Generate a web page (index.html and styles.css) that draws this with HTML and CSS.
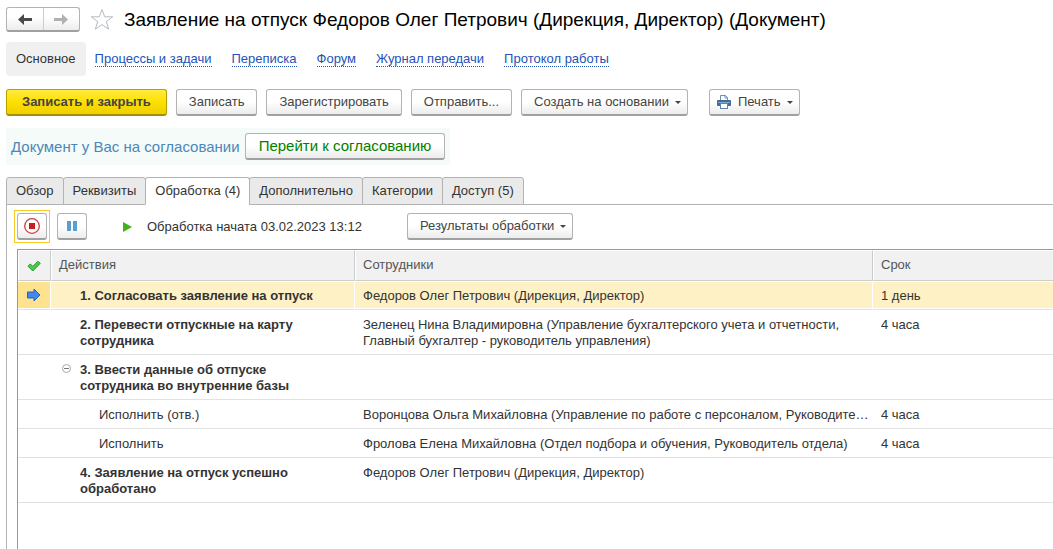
FILE: index.html
```html
<!DOCTYPE html>
<html lang="ru">
<head>
<meta charset="utf-8">
<title>Заявление на отпуск</title>
<link rel="stylesheet" href="styles.css">
</head>
<body>
<header class="titlebar">
  <div class="history">
    <button class="history-btn" type="button" aria-label="Назад">
      <svg width="14" height="11" viewBox="0 0 14 11"><path d="M6 0v4h8v3H6v4L0 5.500z" fill="#4a4a4a"/></svg>
    </button>
    <button class="history-btn" type="button" aria-label="Вперед">
      <svg width="14" height="11" viewBox="0 0 14 11"><path d="M8 0v4H0v3h8v4l6-5.500z" fill="#b0b0b0"/></svg>
    </button>
  </div>
  <button class="star" type="button" aria-label="Избранное">
    <svg width="24" height="23" viewBox="0 0 24 23"><path d="M12 1.500l2.700 7.300h8l-6.400 4.800 2.400 7.600-6.700-4.600-6.700 4.600 2.400-7.600-6.400-4.800h8z" fill="#fff" stroke="#b4bac4" stroke-width="1"/></svg>
  </button>
  <h1 class="title">Заявление на отпуск Федоров Олег Петрович (Дирекция, Директор) (Документ)</h1>
</header>

<nav class="sections">
  <span class="section-current">Основное</span>
  <a href="#">Процессы и задачи</a>
  <a href="#">Переписка</a>
  <a href="#">Форум</a>
  <a href="#">Журнал передачи</a>
  <a href="#">Протокол работы</a>
</nav>

<div class="commands">
  <button class="btn btn-primary" type="button">Записать и закрыть</button>
  <button class="btn" type="button">Записать</button>
  <button class="btn" type="button">Зарегистрировать</button>
  <button class="btn" type="button">Отправить...</button>
  <button class="btn btn-menu" type="button">Создать на основании</button>
  <button class="btn btn-menu btn-print" type="button">
    <svg width="14" height="14" viewBox="0 0 14 14"><path d="M3.500 6V.5h5l2 2V6" fill="#fff" stroke="#6f8fb0"/><path d="M8 .5V3h2.500" fill="none" stroke="#6f8fb0"/><rect x="0" y="5" width="14" height="6" rx="1" fill="#3f6c98"/><path d="M1 7.500h12" stroke="#87a8c8"/><rect x="3.500" y="8.500" width="7" height="5" fill="#fff" stroke="#5f83a8"/></svg>
    Печать
  </button>
</div>

<div class="notice">
  <span>Документ у Вас на согласовании</span>
  <button class="btn btn-approve" type="button">Перейти к согласованию</button>
</div>

<div class="tabs" role="tablist">
  <button class="tab" role="tab" type="button">Обзор</button>
  <button class="tab" role="tab" type="button">Реквизиты</button>
  <button class="tab tab-active" role="tab" type="button" aria-selected="true">Обработка (4)</button>
  <button class="tab" role="tab" type="button">Дополнительно</button>
  <button class="tab" role="tab" type="button">Категории</button>
  <button class="tab" role="tab" type="button">Доступ (5)</button>
</div>

<main class="pane">
  <div class="process-bar">
    <div class="focus-frame">
      <button class="btn btn-icon" type="button" aria-label="Остановить">
        <svg width="16" height="16" viewBox="0 0 16 16"><circle cx="8" cy="8" r="7.300" fill="#fff" stroke="#cf3a3a" stroke-width="1.300"/><rect x="5" y="5" width="6" height="6" fill="#c81e1e"/></svg>
      </button>
    </div>
    <button class="btn btn-icon" type="button" aria-label="Приостановить">
      <svg width="10" height="10" viewBox="0 0 10 10"><path d="M0 0h4v10H0zM6 0h4v10H6z" fill="#5a9fd0"/></svg>
    </button>
    <p class="status">
      <svg width="9" height="10" viewBox="0 0 9 10"><path d="M0 0l9 5-9 5z" fill="#43b31c"/></svg>
      Обработка начата 03.02.2023 13:12
    </p>
    <button class="btn btn-menu" type="button">Результаты обработки</button>
  </div>

  <div class="grid">
    <table class="steps">
      <colgroup><col class="col-mark"><col class="col-action"><col class="col-staff"><col></colgroup>
      <thead>
        <tr>
          <th class="mark"><svg width="14" height="12" viewBox="0 0 14 12"><path d="M1 6.200l2.300-2.300 2.500 2.500L11 1.200l2.200 2.200-7.400 7.600z" fill="#4ccb45" stroke="#219a2c" stroke-linejoin="round"/></svg></th>
          <th>Действия</th>
          <th>Сотрудники</th>
          <th>Срок</th>
        </tr>
      </thead>
      <tbody>
        <tr class="current">
          <td class="mark"><svg width="15" height="14" viewBox="0 0 15 14"><path d="M1.500 4H8V1l6 6-6 6v-3H1.500z" fill="#4387f5" stroke="#2b62a8"/></svg></td>
          <td class="step">1. Согласовать заявление на отпуск</td>
          <td>Федоров Олег Петрович (Дирекция, Директор)</td>
          <td>1 день</td>
        </tr>
        <tr>
          <td></td>
          <td class="step">2. Перевести отпускные на карту сотрудника</td>
          <td>Зеленец Нина Владимировна (Управление бухгалтерского учета и отчетности, Главный бухгалтер - руководитель управления)</td>
          <td>4 часа</td>
        </tr>
        <tr>
          <td></td>
          <td class="step">
            <button class="toggle" type="button" aria-label="Свернуть"><svg width="9" height="9" viewBox="0 0 9 9"><circle cx="4.500" cy="4.500" r="4" fill="#fff" stroke="#a8a8a8"/><path d="M2 4.500h5" stroke="#777"/></svg></button>
            3. Ввести данные об отпуске сотрудника во внутренние базы
          </td>
          <td></td>
          <td></td>
        </tr>
        <tr>
          <td></td>
          <td class="substep">Исполнить (отв.)</td>
          <td class="single">Воронцова Ольга Михайловна (Управление по работе с персоналом, Руководите…</td>
          <td>4 часа</td>
        </tr>
        <tr>
          <td></td>
          <td class="substep">Исполнить</td>
          <td class="single">Фролова Елена Михайловна (Отдел подбора и обучения, Руководитель отдела)</td>
          <td>4 часа</td>
        </tr>
        <tr>
          <td></td>
          <td class="step">4. Заявление на отпуск успешно обработано</td>
          <td>Федоров Олег Петрович (Дирекция, Директор)</td>
          <td></td>
        </tr>
      </tbody>
    </table>
  </div>
</main>
</body>
</html>
```
FILE: styles.css
```css
* { box-sizing: border-box; }

body {
  margin: 0;
  min-height: 100vh;
  padding: 7px 0 0 6px;
  display: flex;
  flex-direction: column;
  background: #fff;
  color: #333;
  font: 13px/16px "Liberation Sans", Arial, sans-serif;
}

button { font: inherit; color: inherit; cursor: pointer; }
svg { display: block; flex: none; }

/* Title row */
.titlebar { display: flex; align-items: center; height: 25px; }

.history {
  display: flex;
  width: 74px;
  height: 25px;
  border: 1px solid #b3b3b3;
  border-bottom: 2px solid #a0a0a0;
  border-radius: 3px;
  background: linear-gradient(#fff 40%, #ededed);
}
.history-btn {
  flex: 1;
  display: flex;
  align-items: center;
  justify-content: center;
  border: 0;
  padding: 0;
  background: none;
}
.history-btn + .history-btn { border-left: 1px solid #ccc; }

.star { margin-left: 10px; padding: 0; border: 0; background: none; }

.title {
  margin: 0 0 0 10px;
  color: #000;
  font-size: 19px;
  line-height: 24px;
  font-weight: 400;
  white-space: nowrap;
}

/* Section links */
.sections { display: flex; align-items: center; gap: 20px; margin-top: 10px; height: 34px; }
.section-current {
  margin-right: -11px;
  padding: 9px 10px;
  border-radius: 4px;
  background: #f0f0f0;
  white-space: nowrap;
}
.sections a {
  color: #2453b8;
  line-height: 14px;
  text-decoration: none;
  border-bottom: 1px dotted #2453b8;
  white-space: nowrap;
}

/* Buttons */
.btn {
  display: flex;
  align-items: center;
  justify-content: center;
  height: 27px;
  padding: 0 12px;
  border: 1px solid #b3b3b3;
  border-bottom: 2px solid #a0a0a0;
  border-radius: 3px;
  background: linear-gradient(#fff 50%, #ececec);
  color: #444;
  white-space: nowrap;
}
.btn-primary {
  padding: 0 15px;
  border-color: #b5a200;
  border-bottom-color: #a39100;
  background: linear-gradient(#ffec3d, #fde000 50%, #efcf00);
  font-weight: 700;
}
.btn-menu { padding-right: 6px; }
.btn-menu::after {
  content: "";
  margin-left: 6px;
  border: 3px solid transparent;
  border-top-color: #444;
  border-bottom: 0;
}
.btn-print { margin-left: 12px; padding-left: 7px; }
.btn-print svg { margin-right: 7px; }
.btn-icon { width: 30px; padding: 0; }
.btn-approve { padding: 0 13px; color: #008000; font-size: 15px; }

.focus-frame { margin: -3px; padding: 2px; border: 1px solid #f7c928; }

.commands { display: flex; gap: 9px; margin-top: 13px; }

.notice {
  display: flex;
  align-items: center;
  align-self: flex-start;
  gap: 5px;
  height: 37px;
  margin-top: 12px;
  padding: 0 5px;
  background: #f4fbf8;
  color: #4d87b8;
  font-size: 15px;
  white-space: nowrap;
}

/* Tabs */
.tabs { position: relative; z-index: 1; display: flex; margin-top: 12px; }
.tab {
  height: 28px;
  margin-right: -1px;
  padding: 0 9px;
  border: 1px solid #b3b3b3;
  border-radius: 3px 3px 0 0;
  background: #eaeaea;
  white-space: nowrap;
}
.tab-active { background: #fff; border-bottom-color: #fff; }

.pane {
  flex: 1;
  display: flex;
  flex-direction: column;
  margin-top: -1px;
  padding: 8px 0 0 10px;
  border: 1px solid #b3b3b3;
  border-width: 1px 0 0 1px;
}

.process-bar { display: flex; align-items: center; gap: 10px; }
.status { display: flex; align-items: center; gap: 15px; margin: 0 35px 0 26px; white-space: nowrap; }

/* Steps table */
.grid {
  flex: 1;
  margin-top: 9px;
  border: 1px solid #999;
  border-width: 1px 0 0 1px;
}
.steps { width: 100%; table-layout: fixed; border-collapse: separate; border-spacing: 0; }
.col-mark { width: 33px; }
.col-action { width: 304px; }
.col-staff { width: 518px; }

.steps th {
  height: 31px;
  padding: 0 7px 2px;
  border: 1px solid #fff;
  border-right-color: #ccc;
  border-bottom-color: #ccc;
  background: #f1f1f1;
  color: #555;
  font-weight: 400;
  text-align: left;
}
.steps th:last-child { border-right: 0; }
.steps td {
  height: 29px;
  padding: 7px 8px 5px;
  border-bottom: 1px solid #e2e2e2;
  vertical-align: top;
}
.steps .step { padding-left: 29px; padding-right: 40px; font-weight: 700; }
.steps .substep { padding-left: 48px; }
.steps .mark { padding: 0 8px; vertical-align: middle; }
.steps .single { padding-right: 0; white-space: nowrap; }

.current td {
  background: #fdf1c5;
  border-right: 1px solid #fff;
  box-shadow: inset 0 1px #fff, inset 0 -1px #fff;
}
.current td:last-child { border-right: 0; }
.steps .current .mark { background: #fde38f; }

.toggle { float: left; margin: 2px 0 0 -18px; padding: 0; border: 0; background: none; }
```
